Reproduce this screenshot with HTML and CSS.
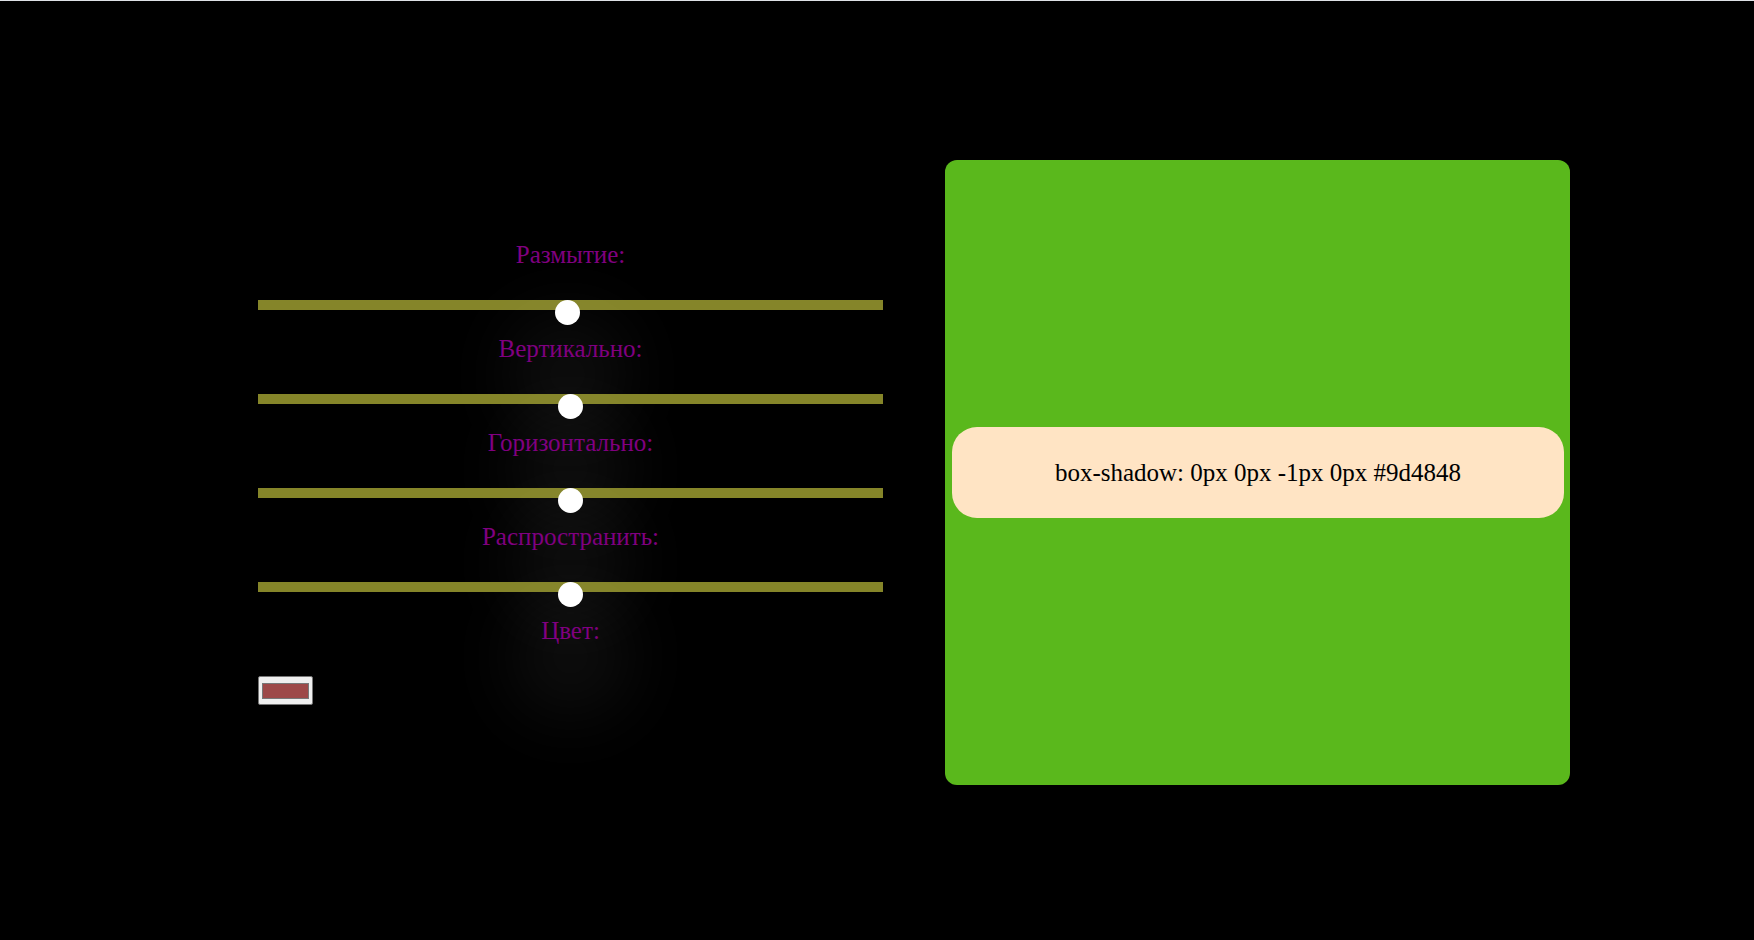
FILE: index.html
```html
<!DOCTYPE html>
<html lang="ru">
<head>
  <meta charset="utf-8">
  <meta name="viewport" content="width=device-width, initial-scale=1">
  <title>box-shadow</title>
  <link rel="stylesheet" href="styles.css">
</head>
<body>
  <main class="page">
    <form class="controls">
      <label class="label" for="blur">Размытие:</label>
      <input class="range" id="blur" type="range" min="-100" max="100" value="-1">
      <label class="label" for="vertical">Вертикально:</label>
      <input class="range" id="vertical" type="range" min="-100" max="100" value="0">
      <label class="label" for="horizontal">Горизонтально:</label>
      <input class="range" id="horizontal" type="range" min="-100" max="100" value="0">
      <label class="label" for="spread">Распространить:</label>
      <input class="range" id="spread" type="range" min="-100" max="100" value="0">
      <label class="label" for="color">Цвет:</label>
      <input class="color" id="color" type="color" value="#9d4848">
    </form>
    <section class="preview">
      <output class="result" for="blur vertical horizontal spread color">box-shadow: 0px 0px -1px 0px #9d4848</output>
    </section>
  </main>
</body>
</html>
```

FILE: styles.css
```css
* {
  box-sizing: border-box;
}

body {
  margin: 0;
  background: #000;
  font-family: "Liberation Serif", "Times New Roman", serif;
  font-size: 25px;
  line-height: 28px;
}

.page {
  display: grid;
  grid-template-columns: 1fr 1fr;
  align-items: center;
  gap: 62px;
  min-height: 100vh;
  padding: 4px 184px 0 258px;
  border-top: 1px solid #dee1e6;
}

.controls {
  display: flex;
  flex-direction: column;
}

.label {
  align-self: center;
  margin-bottom: 31px;
  color: purple;
}

.range {
  appearance: none;
  width: 100%;
  height: 10px;
  margin: 0 0 25px;
  background: transparent;
}

.range::-webkit-slider-runnable-track {
  height: 10px;
  background: #858529;
}

.range::-webkit-slider-thumb {
  appearance: none;
  width: 25px;
  height: 25px;
  border-radius: 50%;
  background: #fff;
  box-shadow: 0 62px 80px 40px rgba(255, 255, 255, 0.07);
}

.color {
  width: 55px;
  height: 29px;
  padding: 2px 1px;
  border: 1px solid #767676;
  border-radius: 2px;
  background: #efefef;
}

.color::-webkit-color-swatch-wrapper {
  padding: 4px 2px 3px;
}

.color::-webkit-color-swatch {
  border: 1px solid #777;
}

.preview {
  display: flex;
  align-items: center;
  aspect-ratio: 1;
  padding: 0 6px 0 7px;
  border-radius: 12px;
  background: #5ab81c;
}

.result {
  flex: 1;
  padding: 32px 24px 31px;
  border-radius: 25px;
  background: bisque;
  color: #000;
  text-align: center;
}
```
